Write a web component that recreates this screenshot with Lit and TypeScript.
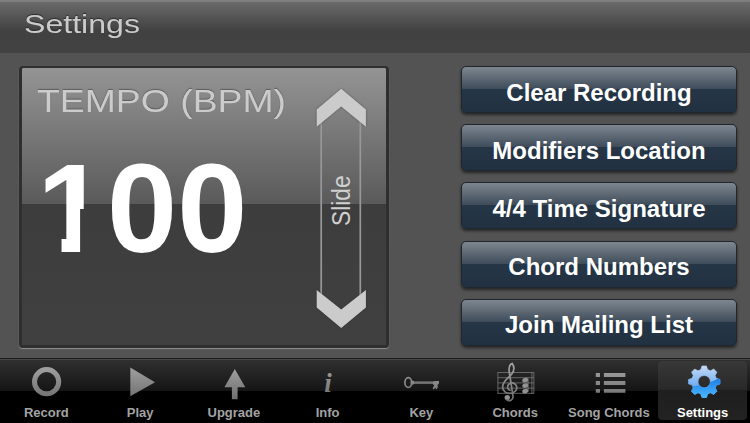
import { LitElement, html, svg, css } from "lit";
import { customElement, property } from "lit/decorators.js";

// Eight-toothed cog outline, alternating between tooth tips and valleys.
function cogPath(cx: number, cy: number, outer: number, inner: number): string {
  const pts: string[] = [];
  for (let i = 0; i < 8; i++) {
    const mid = (i * 45 * Math.PI) / 180;
    const corners: [number, number][] = [
      [inner, -0.27],
      [outer, -0.14],
      [outer, 0.14],
      [inner, 0.27],
    ];
    for (const [r, a] of corners) {
      pts.push(`${(cx + r * Math.cos(mid + a)).toFixed(2)} ${(cy + r * Math.sin(mid + a)).toFixed(2)}`);
    }
  }
  return `M${pts.join("L")}Z`;
}

const icons: Record<string, unknown> = {
  record: svg`<circle cx="24.6" cy="20.7" r="12.1" fill="none" stroke="url(#g)" stroke-width="5"/>`,
  play: svg`<path d="M14.3 6.6L39 21.2L14.3 35.3Z" fill="url(#g)"/>`,
  upgrade: svg`<path d="M24.8 8L35.3 26.3H27.6V38.3H21.9V26.3H14.4Z" fill="url(#g)"/>`,
  info: svg`<text x="20.2" y="31.4" font-family="Liberation Serif, serif" font-style="italic" font-weight="bold" font-size="27" fill="url(#g)">i</text>`,
  key: svg`<ellipse cx="11.3" cy="21.6" rx="3.4" ry="4.9" fill="none" stroke="url(#g)" stroke-width="1.7"/>
    <path d="M13.6 20.6L16 19.6L17.2 20.5H36L38 20H42V22.4L40.3 24.2L41 25.6L39.7 28.4L38.2 26.8L36.8 28.4L35.6 27.2L37.2 24.6L35.6 22.8H17.2L16 23.8L13.6 22.8Z" fill="url(#g)"/>
    <path d="M17 21.6H36" stroke="#5c5c5c" stroke-width=".5"/>`,
  chords: svg`<g fill="none" stroke="#777" stroke-width=".8">
      <path d="M6.6 11.5H43M6.6 16.7H43M6.6 21.9H43M6.6 27.1H43M6.6 32.3H43M6.9 11.2V32.6M40.9 11.2V32.6M42.9 11.2V32.6"/>
    </g>
    <path d="M37 17.5V31" stroke="#888" stroke-width=".9"/>
    <g fill="#929292">
      <ellipse cx="34.2" cy="19.2" rx="3" ry="2.2" transform="rotate(-18 34.2 19.2)"/>
      <ellipse cx="34.2" cy="24.6" rx="3" ry="2.2" transform="rotate(-18 34.2 24.6)"/>
      <ellipse cx="34.2" cy="30.2" rx="3" ry="2.2" transform="rotate(-18 34.2 30.2)"/>
      <circle cx="16.3" cy="36.6" r="2.7"/>
    </g>
    <path d="M15.6 38.6C18.6 41 22.4 39 22 35.2L18.2 10.5C17.6 6 19.4 3.2 21.2 2.6C23.2 5.4 23.4 9.6 20.6 13.2C17.2 17.4 11.6 20.2 11.6 26C11.6 30.4 15.2 32.5 19.4 32.3C24 32 26.4 28.8 25.6 25.4C24.8 21.9 20.4 20.8 17.9 23.2C15.7 25.4 16.6 28.5 19 29.3" fill="none" stroke="url(#g)" stroke-width="1.7" stroke-linecap="round"/>`,
  list: svg`<path d="M10.8 12H15V16H10.8ZM18.9 12H40.4V16H18.9ZM10.8 20H15V24H10.8ZM18.9 20H40.4V24H18.9ZM10.8 28H15V31.8H10.8ZM18.9 28H40.4V31.8H18.9Z" fill="url(#g)"/>`,
  settings: svg`<defs>
      <linearGradient id="hi" gradientUnits="userSpaceOnUse" x1="0" y1="5" x2="0" y2="26">
        <stop offset="0" stop-color="#c3daf6"/><stop offset="1" stop-color="#6caaf0"/>
      </linearGradient>
      <linearGradient id="lo" gradientUnits="userSpaceOnUse" x1="0" y1="18" x2="0" y2="36">
        <stop offset="0" stop-color="#1f7fe6"/><stop offset="1" stop-color="#48b6ff"/>
      </linearGradient>
      <clipPath id="lower"><path d="M5 25.5C17 26 31 23 44 15V42H5Z"/></clipPath>
    </defs>
    <path d="${cogPath(25.2, 20.7, 15.9, 12.6)}M31.4 20.7a6.2 6.2 0 1 0-12.4 0a6.2 6.2 0 1 0 12.4 0Z" fill="url(#hi)" fill-rule="evenodd" stroke="url(#hi)" stroke-width=".6" stroke-linejoin="round"/>
    <path clip-path="url(#lower)" d="${cogPath(25.2, 20.7, 15.9, 12.6)}M31.4 20.7a6.2 6.2 0 1 0-12.4 0a6.2 6.2 0 1 0 12.4 0Z" fill="url(#lo)" fill-rule="evenodd" stroke="url(#lo)" stroke-width=".6" stroke-linejoin="round"/>`,
};

@customElement("tab-item")
class TabItem extends LitElement {
  @property() label = "";
  @property() icon = "";
  @property({ type: Boolean, reflect: true }) active = false;

  static styles = css`
    :host {
      flex: 1 1 0;
      min-width: 0;
      display: flex;
      padding: 2px 3px 3px 2px;
    }
    .tab {
      flex: 1;
      display: flex;
      flex-direction: column;
      align-items: center;
      border-radius: 4px;
      color: #a3a3a3;
    }
    :host([active]) .tab {
      color: #fff;
      background: linear-gradient(#383838, #292929 48%, #1f1f1f 50%, #222);
    }
    svg {
      display: block;
      flex: none;
    }
    .label {
      font: bold 13px/16px "Liberation Sans", Arial, sans-serif;
      margin-top: 3px;
      white-space: nowrap;
    }
  `;

  render() {
    return html`<div class="tab">
      <svg width="48" height="41" viewBox="0 0 48 41">
        <defs>
          <linearGradient id="g" gradientUnits="userSpaceOnUse" x1="0" y1="4" x2="0" y2="38">
            <stop offset="0" stop-color="#a4a4a4" />
            <stop offset="1" stop-color="#6f6f6f" />
          </linearGradient>
        </defs>
        ${icons[this.icon]}
      </svg>
      <span class="label">${this.label}</span>
    </div>`;
  }
}

@customElement("tempo-slider")
class TempoSlider extends LitElement {
  static styles = css`
    :host {
      display: block;
    }
    svg {
      display: block;
    }
    .arrow {
      fill: #cbcbcb;
      filter: drop-shadow(0 0 1px rgba(50, 50, 50, 0.55));
    }
    .word {
      font: 26px "Liberation Sans", Arial, sans-serif;
      fill: #d0d0d0;
    }
  `;

  render() {
    return html`<svg width="56" height="250" viewBox="313 84 56 250">
      <path d="M321.2 118V298M360.3 118V298" stroke="#989898" stroke-width="1.7" />
      <path class="arrow" d="M341.2 88.7L365.9 109.4V126.8L341.2 106.6L316.7 126.8V109.4Z" />
      <path class="arrow" d="M341.2 309.6L365.9 290V307.6L341.2 328L316.7 307.6V290Z" />
      <text class="word" transform="translate(350.4 226) rotate(-90) scale(.875 1)">Slide</text>
    </svg>`;
  }
}

@customElement("app-root")
class AppRoot extends LitElement {
  static styles = css`
    :host {
      display: flex;
      flex-direction: column;
      box-sizing: border-box;
      width: 750px;
      height: 423px;
      overflow: hidden;
      background: #535353;
      font-family: "Liberation Sans", Arial, sans-serif;
    }
    header {
      height: 53px;
      flex: none;
      box-sizing: border-box;
      border-top: 2px solid #7e7e7e;
      padding: 7px 0 0 24px;
      background: linear-gradient(#6a6a6a, #414141 29px, #424242);
    }
    h1 {
      margin: 0;
      font-weight: normal;
      font-size: 26px;
      line-height: 30px;
      color: #cbcbcb;
      text-shadow: 0 -1px 1px #2b2b2b;
      transform: scaleX(1.235);
      transform-origin: 0 0;
    }
    main {
      flex: 1;
      display: flex;
      justify-content: space-between;
      padding: 13px 13px 0 19px;
    }
    .panel {
      box-sizing: border-box;
      width: 370px;
      height: 282px;
      display: flex;
      justify-content: space-between;
      border: 3px solid #2f2f2f;
      border-top-width: 2px;
      border-radius: 4px;
      background: linear-gradient(#949494, #5a5a5a 136px, #3d3d3d 136px, #404040);
      box-shadow: 0 1px 1px #929292;
      padding: 16px 17px 0 15px;
    }
    h2 {
      margin: 0;
      font-weight: normal;
      font-size: 31.4px;
      line-height: 36px;
      color: #cbcbcb;
      text-shadow: 0 -1px 1px #5c5c5c;
      white-space: nowrap;
      transform: scaleX(1.19);
      transform-origin: 0 0;
      width: 210px;
    }
    .bpm {
      margin-top: 17px;
      font-weight: bold;
      font-size: 126px;
      line-height: 144px;
      color: #fff;
      display: flex;
    }
    .one {
      clip-path: polygon(0 0, 100% 0, 100% 50%, 61.5% 50%, 61.5% 100%, 35% 100%, 35% 50%, 0 50%);
    }
    .actions {
      display: flex;
      flex-direction: column;
      gap: 11.2px;
    }
    button {
      box-sizing: border-box;
      width: 276px;
      height: 47px;
      padding: 6px 0 0 0;
      margin: 0 0 0 0;
      border: 1.5px solid #20262d;
      border-radius: 5px;
      background: linear-gradient(#7e8790, #3e4b59 22px, #253646 22px, #223141);
      box-shadow: 0 2px 3px rgba(0, 0, 0, 0.55);
      color: #fff;
      font: bold 24px/38px "Liberation Sans", Arial, sans-serif;
      white-space: nowrap;
    }
    nav {
      height: 65px;
      flex: none;
      box-sizing: border-box;
      display: flex;
      border-top: 1px solid #1b1b1b;
      box-shadow: inset 0 1px #474747;
      background: linear-gradient(#303030, #151515 32px, #000 32px);
    }
  `;

  private actions = ["Clear Recording", "Modifiers Location", "4/4 Time Signature", "Chord Numbers", "Join Mailing List"];

  private tabs = [
    ["Record", "record"],
    ["Play", "play"],
    ["Upgrade", "upgrade"],
    ["Info", "info"],
    ["Key", "key"],
    ["Chords", "chords"],
    ["Song Chords", "list"],
    ["Settings", "settings"],
  ];

  render() {
    return html`
      <header><h1>Settings</h1></header>
      <main>
        <section class="panel">
          <div>
            <h2>TEMPO (BPM)</h2>
            <div class="bpm"><span class="one">1</span><span>00</span></div>
          </div>
          <tempo-slider></tempo-slider>
        </section>
        <div class="actions">${this.actions.map((a) => html`<button>${a}</button>`)}</div>
      </main>
      <nav>
        ${this.tabs.map(
          ([label, icon]) => html`<tab-item label=${label} icon=${icon} ?active=${icon === "settings"}></tab-item>`
        )}
      </nav>
    `;
  }
}
